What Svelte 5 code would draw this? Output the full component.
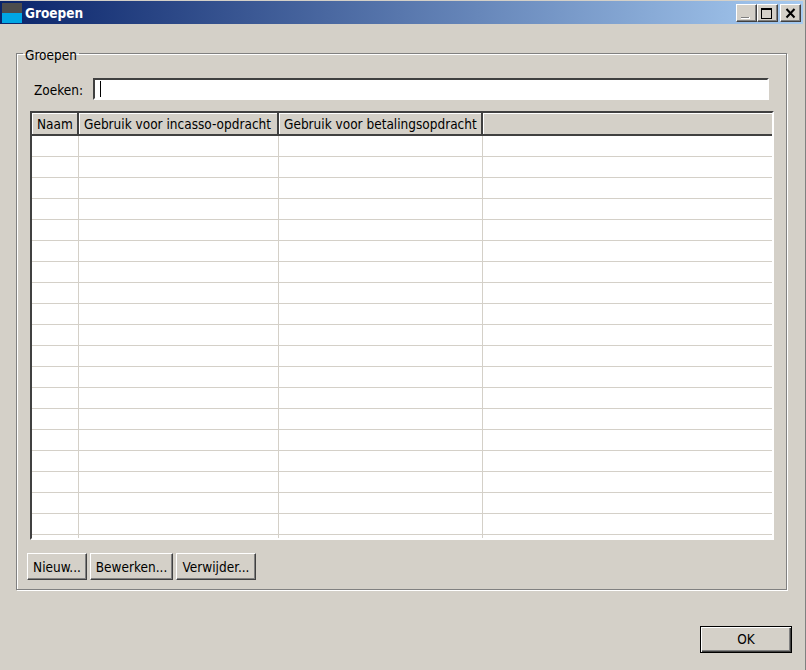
<script lang="ts">
  const rows = Array.from({ length: 20 }, (_, i) => i);
  const columns = ['Naam', 'Gebruik voor incasso-opdracht', 'Gebruik voor betalingsopdracht', ''];
</script>

<div class="window">
  <header class="titlebar">
    <span class="app-icon" aria-hidden="true"></span>
    <span class="title">Groepen</span>
    <div class="controls">
      <button type="button" class="ctl" aria-label="Minimaliseren">
        <svg viewBox="0 0 19 16" width="19" height="16" aria-hidden="true"><rect x="4" y="12" width="9" height="2" fill="#fff" /><rect x="4" y="12" width="8" height="1" fill="#808080" /></svg>
      </button>
      <button type="button" class="ctl" aria-label="Maximaliseren">
        <svg viewBox="0 0 19 16" width="19" height="16" aria-hidden="true"><rect x="3.5" y="3.5" width="10" height="10" fill="none" stroke="#000" /><rect x="3" y="3" width="11" height="2" /></svg>
      </button>
      <button type="button" class="ctl close" aria-label="Sluiten">
        <svg viewBox="0 0 19 16" width="19" height="16" aria-hidden="true"><path d="M5.5 4l8 8.5M13.5 4l-8 8.5" fill="none" stroke="#000" stroke-width="2" /></svg>
      </button>
    </div>
  </header>

  <main class="content">
    <fieldset class="group">
      <legend>Groepen</legend>
      <div class="search">
        <label for="zoeken">Zoeken:</label>
        <div class="input"><span class="caret"></span><input id="zoeken" type="text" /></div>
      </div>

      <div class="table">
        <div class="head">
          {#each columns as col}
            <div class="th">{col}</div>
          {/each}
        </div>
        <div class="body">
          {#each rows as row (row)}
            <div class="row">
              {#each columns as col}
                <div class="td"></div>
              {/each}
            </div>
          {/each}
        </div>
      </div>

      <div class="actions">
        <button type="button" class="btn nieuw">Nieuw...</button>
        <button type="button" class="btn bewerken">Bewerken...</button>
        <button type="button" class="btn verwijder">Verwijder...</button>
      </div>
    </fieldset>

    <div class="footer">
      <button type="button" class="ok">OK</button>
    </div>
  </main>
</div>

<style>
  :global(body) {
    background: #d4d0c8;
  }
  .window {
    width: 806px;
    height: 670px;
    box-sizing: border-box;
    overflow: hidden;
    background: #d4d0c8;
    border-right: 1px solid #808080;
    color: #000;
    font-family: "DejaVu Sans Condensed", "DejaVu Sans", sans-serif;
    font-stretch: condensed;
    font-size: 13.5px;
    display: flex;
    flex-direction: column;
  }
  .titlebar {
    height: 23px;
    margin: 1px 2px 0 0;
    flex: none;
    display: flex;
    align-items: center;
    background: linear-gradient(90deg, #0a246a, #a6caf0);
  }
  .app-icon {
    width: 20px;
    height: 20px;
    margin-left: 2px;
    background: linear-gradient(#4d4d4d 50%, #00a6e4 50%);
  }
  .title {
    margin-left: 3px;
    color: #fff;
    font-weight: bold;
  }
  .controls {
    margin-left: auto;
    margin-right: 2px;
    display: flex;
  }
  .ctl {
    width: 21px;
    height: 18px;
    padding: 0;
    background: #d4d0c8;
    border: 1px solid;
    border-color: #fff #404040 #404040 #fff;
    box-shadow: inset -1px -1px 0 #808080;
  }
  .ctl svg {
    display: block;
  }
  .close {
    margin-left: 2px;
  }
  .content {
    flex: 1;
    padding: 19px 13px 0 16px;
    display: flex;
    flex-direction: column;
  }
  .group {
    margin: 0;
    padding: 15px 12px 10px 10px;
    width: 770px;
    height: 547px;
    box-sizing: border-box;
    border: 1px solid #808080;
    box-shadow: 1px 1px 0 #fff, inset 1px 1px 0 #fff;
  }
  legend {
    padding: 4px 2px 0;
    margin-left: -4px;
    color: #000;
  }
  .search {
    display: flex;
    align-items: center;
    margin-left: 7px;
  }
  label {
    width: 59px;
    padding-top: 2px;
  }
  .input {
    position: relative;
    flex: none;
    width: 672px;
    height: 18px;
    background: #fff;
    border: 2px solid;
    border-color: #404040 #fff #fff #404040;
  }
  .input input {
    display: block;
    width: 100%;
    height: 100%;
    box-sizing: border-box;
    border: 0;
    padding: 0;
    background: transparent;
  }
  .caret {
    position: absolute;
    left: 5px;
    top: 1px;
    width: 1px;
    height: 16px;
    background: #000;
  }
  .table {
    margin: 11px 0 0 3px;
    width: 744px;
    height: 429px;
    box-sizing: border-box;
    overflow: hidden;
    border: 2px solid;
    border-color: #404040 #fff #fff #404040;
    background: #fff;
  }
  .head,
  .row {
    display: grid;
    grid-template-columns: 47px 200px 204px 1fr;
  }
  .head {
    height: 23px;
    box-sizing: border-box;
    background: #d4d0c8;
    border-bottom: 2px solid #404040;
  }
  .th {
    padding-left: 5px;
    line-height: 23px;
    height: 21px;
    box-sizing: border-box;
    white-space: nowrap;
    border-right: 2px solid #404040;
    box-shadow: inset 1px 1px 0 #fff;
  }
  .th:last-child {
    border-right: 0;
  }
  .row {
    height: 21px;
    box-sizing: border-box;
    border-bottom: 1px solid #d4d0c8;
  }
  .td {
    border-right: 1px solid #d4d0c8;
  }
  .td:last-child {
    border-right: 0;
  }
  .actions {
    margin-top: 13px;
    display: flex;
    gap: 3px;
  }
  .btn {
    height: 27px;
    padding: 0;
    font: inherit;
    background: #d4d0c8;
    border: 1px solid;
    border-color: #fff #404040 #404040 #fff;
    box-shadow: inset -1px -1px 0 #808080;
  }
  .nieuw { width: 60px; }
  .bewerken { width: 83px; }
  .verwijder { width: 80px; }
  .footer {
    margin-top: 36px;
    display: flex;
    justify-content: flex-end;
  }
  .ok {
    width: 92px;
    height: 27px;
    padding: 0 0 2px;
    font: inherit;
    background: #d4d0c8;
    border: 1px solid #000;
    box-shadow: inset 1px 1px 0 #fff, inset -1px -1px 0 #404040, inset -2px -2px 0 #808080;
  }
</style>
